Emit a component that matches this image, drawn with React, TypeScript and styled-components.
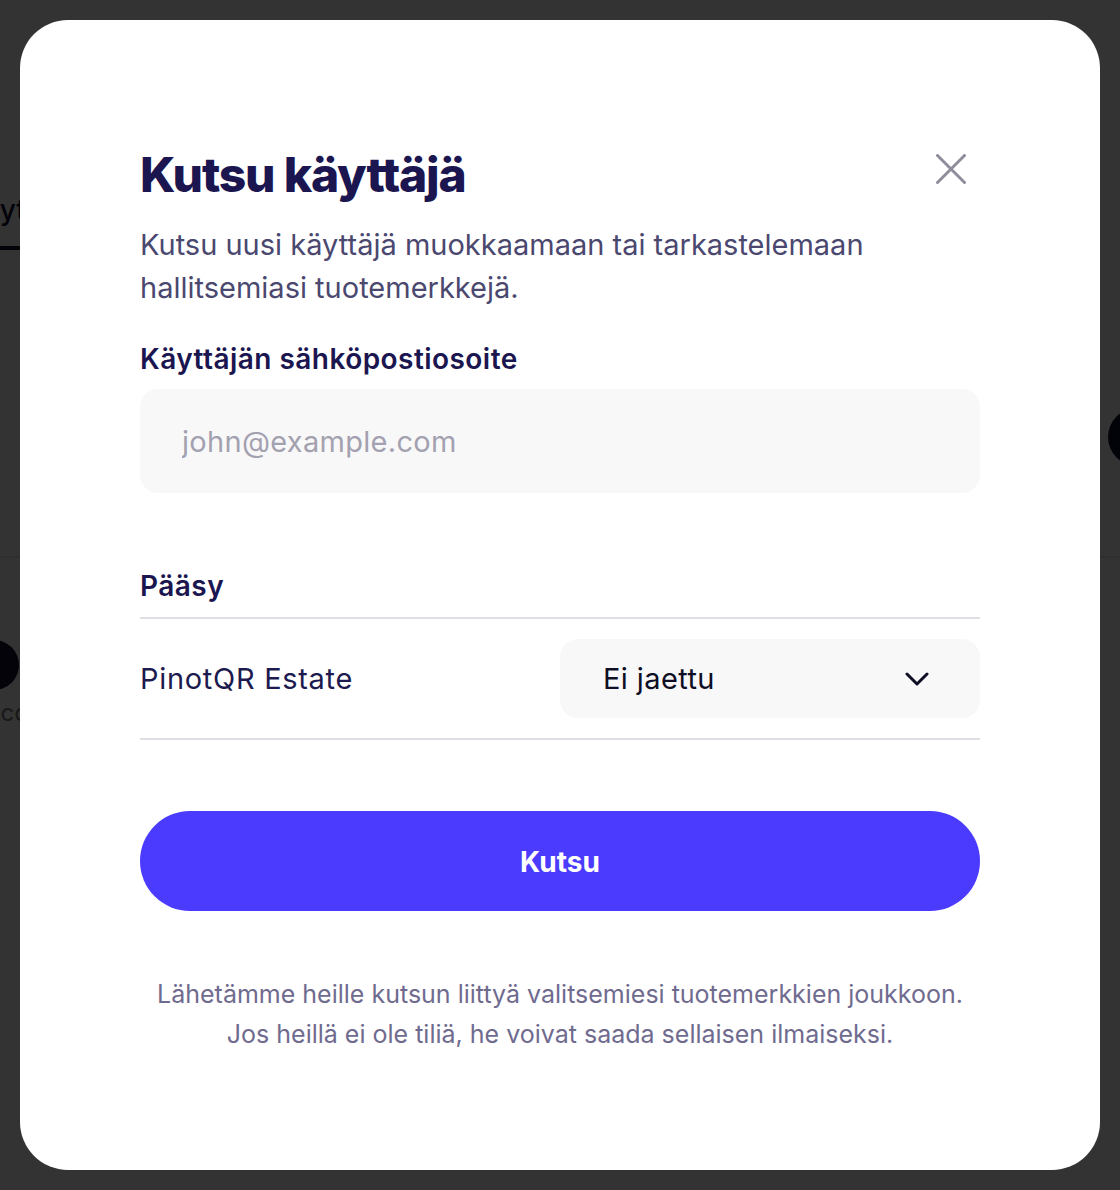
import React from "react";
import styled, { createGlobalStyle } from "styled-components";

const GlobalStyle = createGlobalStyle`
  html, body {
    margin: 0;
    padding: 0;
  }
  body {
    font-family: Inter, "Noto Sans", sans-serif;
    background: #ffffff;
    -webkit-font-smoothing: antialiased;
  }
  *, *::before, *::after {
    box-sizing: border-box;
  }
`;

/* ---------- page behind the dialog ---------- */

const Page = styled.div`
  min-height: 1190px;
  background: #ffffff;
  overflow: hidden;
  color: #0c0a2c;
`;

const PageHeader = styled.header`
  height: 250px;
  display: flex;
  align-items: flex-end;
`;

const Tab = styled.div`
  margin-left: -35px;
  padding-bottom: 20px;
  font-size: 28px;
  line-height: 32px;
  font-weight: 500;
  border-bottom: 4px solid #0c0a2c;
`;

const Toolbar = styled.section`
  height: 308px;
  display: flex;
  justify-content: flex-end;
  align-items: flex-start;
  padding-top: 158px;
  border-bottom: 2px solid #ececec;
`;

const RoundAction = styled.div`
  width: 58px;
  height: 58px;
  border-radius: 50%;
  background: #0d0b2e;
  margin-right: -46px;
  flex-shrink: 0;
`;

const ListItem = styled.div`
  display: flex;
  flex-direction: column;
  align-items: flex-start;
  padding-top: 82px;
`;

const ItemAvatar = styled.div`
  width: 50px;
  height: 50px;
  border-radius: 50%;
  background: #14122e;
  margin-left: -31px;
`;

const ItemCaption = styled.div`
  margin-left: -16px;
  margin-top: 8px;
  font-size: 24px;
  line-height: 30px;
  color: #7a7a7a;
`;

/* ---------- dialog ---------- */

const Overlay = styled.div`
  position: fixed;
  inset: 0;
  background: rgba(0, 0, 0, 0.8);
  display: flex;
  justify-content: center;
  align-items: flex-start;
  padding: 20px;
`;

const Dialog = styled.div`
  width: 1080px;
  background: #ffffff;
  border-radius: 48px;
  padding: 127px 120px 116px;
  display: flex;
  flex-direction: column;
`;

const TitleRow = styled.div`
  display: flex;
  align-items: center;
  justify-content: space-between;
`;

const Title = styled.h2`
  margin: 0;
  font-size: 48px;
  line-height: 56px;
  font-weight: 800;
  letter-spacing: -1.2px;
  color: #1b1650;
`;

const CloseButton = styled.button`
  border: 0;
  background: none;
  padding: 0;
  width: 30px;
  height: 30px;
  margin: 0 14px 12px 0;
  color: #8f8d9b;
  display: flex;
  cursor: pointer;
`;

const Description = styled.p`
  margin: 20px 0 0;
  font-size: 29px;
  line-height: 43px;
  font-weight: 400;
  color: #4b4870;
`;

const FieldLabel = styled.label<{ $gap: number }>`
  display: block;
  margin-top: ${(p) => p.$gap}px;
  font-size: 28px;
  line-height: 34px;
  font-weight: 600;
  letter-spacing: 0.45px;
  color: #1b1650;
`;

const EmailInput = styled.input`
  margin-top: 13px;
  width: 100%;
  height: 104px;
  border: 0;
  outline: none;
  border-radius: 18px;
  background: #f8f8f9;
  padding: 0 42px;
  font-family: inherit;
  font-size: 29px;
  letter-spacing: 0.3px;
  color: #1b1650;

  &::placeholder {
    color: #a3a1b0;
  }
`;

const SectionHeading = styled(FieldLabel)`
  padding-bottom: 14px;
  border-bottom: 2px solid #dfdee4;
`;

const AccessRow = styled.div`
  display: grid;
  grid-template-columns: 1fr 1fr;
  align-items: center;
  padding: 20px 0;
  border-bottom: 2px solid #dfdee4;
`;

const BrandName = styled.span`
  font-size: 29px;
  line-height: 36px;
  letter-spacing: 0.7px;
  color: #1d1a4f;
`;

const SelectButton = styled.button`
  height: 79px;
  border: 0;
  border-radius: 18px;
  background: #f8f8f9;
  display: flex;
  align-items: center;
  justify-content: space-between;
  padding: 0 51px 0 43px;
  font-family: inherit;
  font-size: 29px;
  letter-spacing: 0.4px;
  color: #0e0e24;
  cursor: pointer;
`;

const InviteButton = styled.button`
  margin-top: 71px;
  height: 100px;
  border: 0;
  border-radius: 50px;
  background: #4b3bff;
  color: #ffffff;
  font-family: inherit;
  font-size: 28px;
  font-weight: 700;
  padding-top: 3px;
  cursor: pointer;
`;

const FootNote = styled.p`
  margin: 63px 0 0;
  text-align: center;
  font-size: 25px;
  line-height: 40px;
  color: #6f6b8f;
`;

const CloseIcon = () => (
  <svg width="30" height="30" viewBox="0 0 30 30" fill="none">
    <path
      d="M1.5 1.5 28.5 28.5M28.5 1.5 1.5 28.5"
      stroke="currentColor"
      strokeWidth="3"
      strokeLinecap="round"
    />
  </svg>
);

const ChevronIcon = () => (
  <svg width="24" height="14" viewBox="0 0 24 14" fill="none">
    <path
      d="M2 2l10 10 10-10"
      stroke="currentColor"
      strokeWidth="3"
      strokeLinecap="round"
      strokeLinejoin="round"
    />
  </svg>
);

export default function App() {
  return (
    <>
      <GlobalStyle />
      <Page>
        <PageHeader>
          <Tab>Käyttäjät</Tab>
        </PageHeader>
        <Toolbar>
          <RoundAction />
        </Toolbar>
        <ListItem>
          <ItemAvatar />
          <ItemCaption>Account</ItemCaption>
        </ListItem>
      </Page>

      <Overlay>
        <Dialog role="dialog" aria-modal="true">
          <TitleRow>
            <Title>Kutsu käyttäjä</Title>
            <CloseButton aria-label="Sulje">
              <CloseIcon />
            </CloseButton>
          </TitleRow>
          <Description>
            Kutsu uusi käyttäjä muokkaamaan tai tarkastelemaan hallitsemiasi
            tuotemerkkejä.
          </Description>

          <FieldLabel $gap={33} htmlFor="invite-email">
            Käyttäjän sähköpostiosoite
          </FieldLabel>
          <EmailInput id="invite-email" type="email" placeholder="john@example.com" />

          <SectionHeading $gap={76} as="div">
            Pääsy
          </SectionHeading>
          <AccessRow>
            <BrandName>PinotQR Estate</BrandName>
            <SelectButton type="button">
              <span>Ei jaettu</span>
              <ChevronIcon />
            </SelectButton>
          </AccessRow>

          <InviteButton type="button">Kutsu</InviteButton>

          <FootNote>
            Lähetämme heille kutsun liittyä valitsemiesi tuotemerkkien joukkoon.
            <br />
            Jos heillä ei ole tiliä, he voivat saada sellaisen ilmaiseksi.
          </FootNote>
        </Dialog>
      </Overlay>
    </>
  );
}
